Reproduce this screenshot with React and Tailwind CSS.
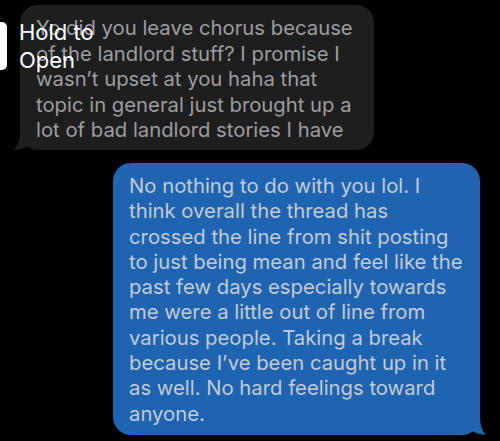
import React from "react";

const grayLines = [
  "Yo did you leave chorus because",
  "of the landlord stuff? I promise I",
  "wasn\u2019t upset at you haha that",
  "topic in general just brought up a",
  "lot of bad landlord stories I have",
];

const blueLines = [
  "No nothing to do with you lol. I",
  "think overall the thread has",
  "crossed the line from shit posting",
  "to just being mean and feel like the",
  "past few days especially towards",
  "me were a little out of line from",
  "various people. Taking a break",
  "because I\u2019ve been caught up in it",
  "as well. No hard feelings toward",
  "anyone.",
];

export default function App() {
  return (
    <div
      className="relative w-[500px] h-[441px] overflow-hidden bg-black"
      style={{ fontFamily: 'Inter, "Liberation Sans", sans-serif' }}
    >
      {/* === incoming (gray) === */}
      <div className="pl-[20px] pt-[5px]">
        <div className="relative w-[354px] h-[145px] rounded-[18px] bg-[#1e1e1f] pl-[16px] pt-[10px]">
          {grayLines.map((l) => (
            <div key={l} className="whitespace-nowrap text-[20.3px] leading-[25.5px] text-[#9d9d9f]">
              {l}
            </div>
          ))}
          <svg className="absolute left-[-7px] bottom-0" width="24" height="20" viewBox="0 0 24 20">
            <path d="M24 0 L7 0 C7 10 5 16 1 19.5 C8 20 14 17 18 14 L24 14 Z" fill="#1e1e1f" />
          </svg>
        </div>
      </div>

      {/* === outgoing (blue) === */}
      <div className="flex justify-end pr-[20px] pt-[13px]">
        <div className="relative w-[367px] h-[272px] rounded-[18px] bg-[#1f64b0] pl-[16px] pt-[10px]">
          {blueLines.map((l) => (
            <div key={l} className="whitespace-nowrap text-[20.3px] leading-[25.3px] text-[#c3cbd6]">
              {l}
            </div>
          ))}
          <svg className="absolute right-[-7px] bottom-0" width="24" height="20" viewBox="0 0 24 20">
            <path d="M0 0 L17 0 C17 10 19 16 23 19.5 C16 20 10 17 6 14 L0 14 Z" fill="#1f64b0" />
          </svg>
        </div>
      </div>

      {/* === hold to open overlay === */}
      <div className="absolute left-0 top-[22px] w-[7px] h-[48px] rounded-r-[5px] bg-white" />
      <div className="absolute left-[19px] top-[18px] text-[22px] leading-[28px] text-white">
        Hold to
        <br />
        Open
      </div>
    </div>
  );
}
